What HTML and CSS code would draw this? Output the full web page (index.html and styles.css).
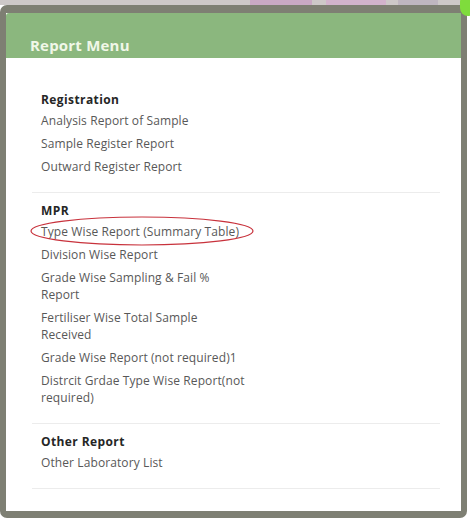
FILE: index.html
```html
<!DOCTYPE html>
<html>
<head>
<meta charset="utf-8">
<link rel="stylesheet" href="styles.css">
</head>
<body>
<div class="backdrop">
  <span class="bg-chip chip-a"></span>
  <span class="bg-chip chip-b"></span>
  <span class="bg-chip chip-c"></span>
</div>
<span class="close-knob"></span>
<div class="modal">
  <div class="modal-header">
    <h1 class="modal-title">Report Menu</h1>
  </div>
  <div class="modal-body">
    <div class="section">
      <div class="section-title">Registration</div>
      <a class="item">Analysis Report of Sample</a>
      <a class="item">Sample Register Report</a>
      <a class="item">Outward Register Report</a>
    </div>
    <div class="section">
      <div class="section-title">MPR</div>
      <a class="item marked">Type Wise Report (Summary Table)
        <svg class="ring" width="226" height="32" viewBox="0 0 226 32"><ellipse cx="113" cy="16" rx="111" ry="14" fill="none" stroke="#c8323c" stroke-width="1.2"/></svg>
      </a>
      <a class="item">Division Wise Report</a>
      <a class="item">Grade Wise Sampling &amp; Fail % Report</a>
      <a class="item">Fertiliser Wise Total Sample Received</a>
      <a class="item">Grade Wise Report (not required)1</a>
      <a class="item">Distrcit Grdae Type Wise Report(not required)</a>
    </div>
    <div class="section">
      <div class="section-title">Other Report</div>
      <a class="item">Other Laboratory List</a>
    </div>
  </div>
</div>
</body>
</html>
```
FILE: styles.css
```css
html, body {
  margin: 0;
  padding: 0;
  background: #ffffff;
  font-family: "Open Sans", "DejaVu Sans", sans-serif;
}
body {
  position: relative;
  width: 470px;
  height: 526px;
  overflow: hidden;
}
.backdrop {
  height: 5px;
  background: #cdc8c8;
  display: flex;
}
.bg-chip {
  display: block;
  height: 5px;
  background: #c9a9c4;
}
.chip-a { margin-left: 250px; width: 62px; }
.chip-b { margin-left: 14px; width: 60px; background: #d2b3cc; }
.chip-c { margin-left: 12px; width: 40px; background: #bfb6c0; }
.close-knob {
  position: absolute;
  right: -6px;
  top: -6px;
  width: 16px;
  height: 22px;
  border-radius: 8px;
  background: #7fdc3c;
}
.modal {
  width: 467px;
  height: 513px;
  box-sizing: border-box;
  border: 6px solid #7e7f73;
  border-top-width: 8px;
  border-bottom-width: 7px;
  border-radius: 7px;
  background: #ffffff;
  display: flex;
  flex-direction: column;
}
.modal-header {
  height: 45px;
  box-sizing: border-box;
  background: #8bb77e;
  padding: 22px 0 0 24px;
  border-top-left-radius: 3px;
}
.modal-title {
  margin: 0;
  font-size: 15px;
  line-height: 20px;
  font-weight: 700;
  color: #f1f7e8;
  letter-spacing: 0.2px;
}
.modal-body {
  padding: 33px 21px 0 26px;
}
.section {
  display: flex;
  flex-direction: column;
  align-items: flex-start;
  padding: 0 0 17px 9px;
  border-bottom: 1px solid #ececec;
  margin-bottom: 9px;
}
.section-title {
  font-size: 12px;
  line-height: 17px;
  font-weight: 700;
  color: #262626;
  letter-spacing: 0.4px;
  margin-bottom: -2px;
}
.item {
  display: block;
  width: 206px;
  margin-top: 6px;
  font-size: 12px;
  line-height: 17px;
  color: #585858;
  letter-spacing: 0.1px;
}
.marked {
  position: relative;
  width: 215px;
}
.ring {
  position: absolute;
  left: -12px;
  top: -8px;
}
```
